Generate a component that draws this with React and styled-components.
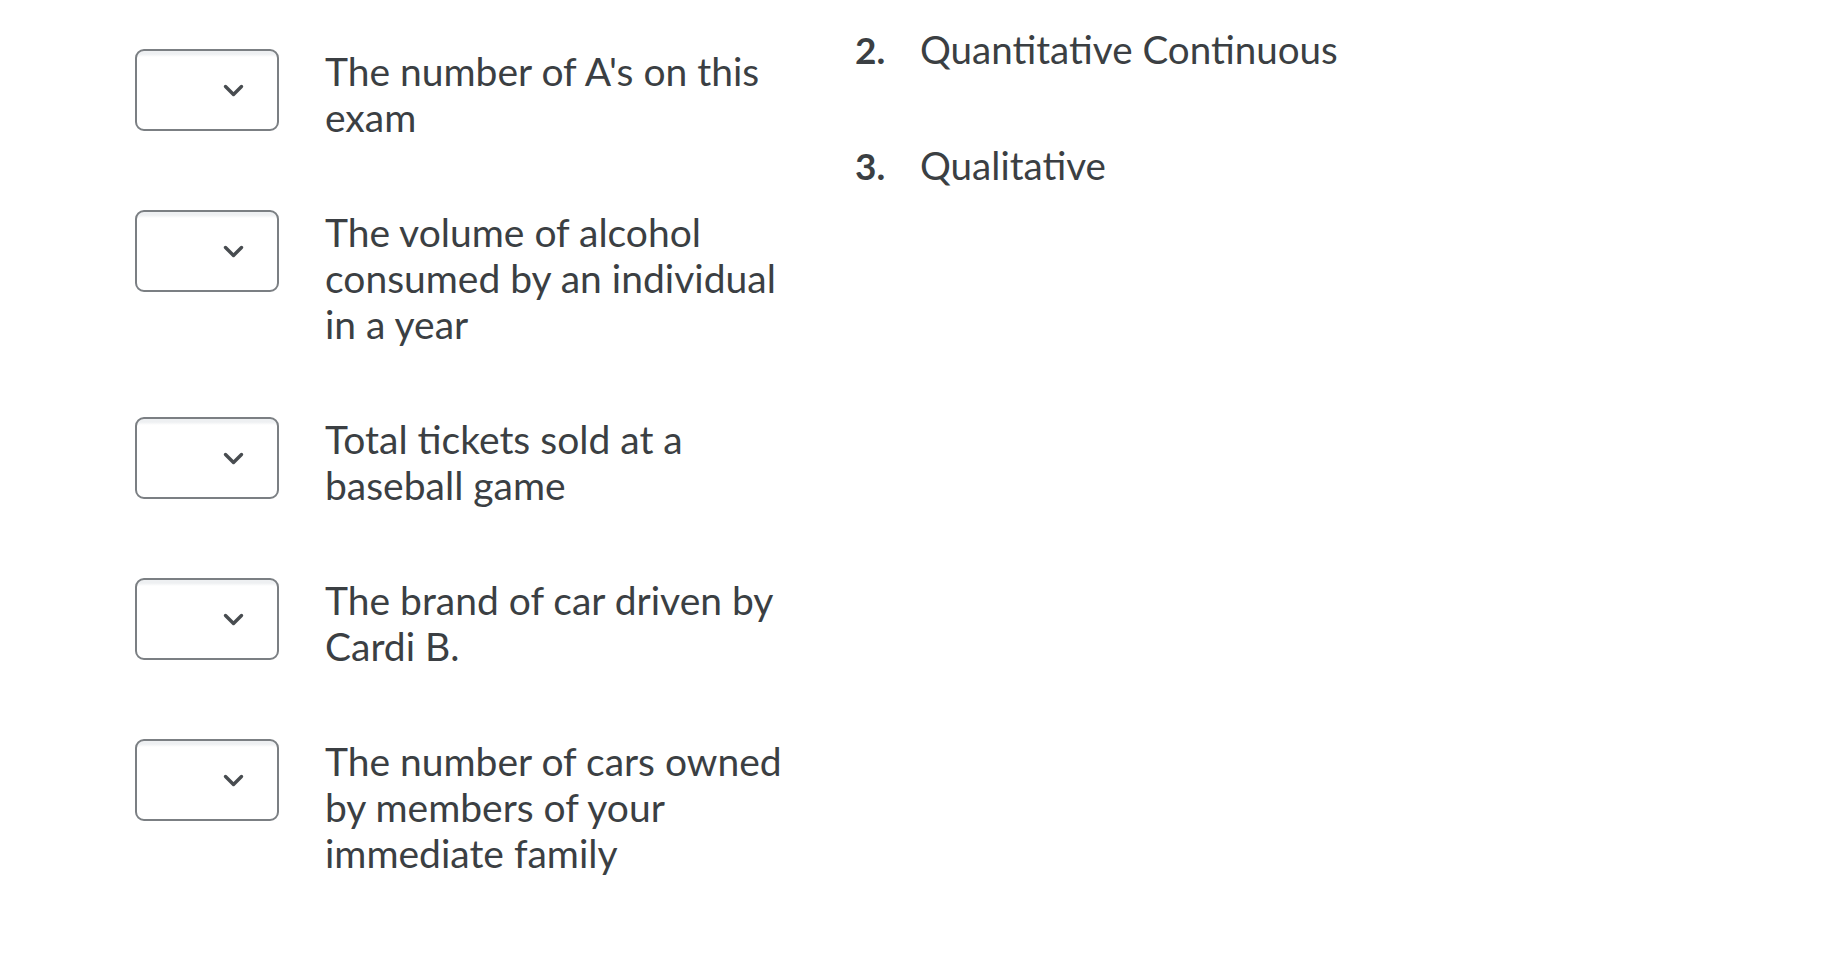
import styled, { createGlobalStyle } from 'styled-components';

const GlobalStyle = createGlobalStyle`
  html, body {
    margin: 0;
    padding: 0;
    background: #fff;
  }
  body {
    font-family: Lato, "Open Sans", sans-serif;
    color: #3b3f43;
  }
`;

const Page = styled.div`
  display: flex;
  align-items: flex-start;
  padding: 49px 0 0 135px;
`;

const Questions = styled.div`
  display: flex;
  flex-direction: column;
  gap: 70px;
  width: 660px;
`;

const Row = styled.div`
  display: flex;
  align-items: flex-start;
  gap: 46px;
`;

const SelectBox = styled.div`
  flex: none;
  width: 144px;
  height: 82px;
  box-sizing: border-box;
  border: 2px solid #7b7f83;
  border-radius: 9px;
  background: linear-gradient(#eef0f2 0, #eef0f2 3px, #fff 6px);
  display: flex;
  align-items: center;
  justify-content: flex-end;
  padding-right: 32px;

  svg {
    width: 23px;
    height: 15px;
  }
`;

const Prompt = styled.div`
  flex: 1;
  margin-top: -1px;
  font-size: 39px;
  line-height: 46px;
`;

const Answers = styled.ol`
  list-style: none;
  margin: -23px 0 0 60px;
  padding: 0;
  display: flex;
  flex-direction: column;
  gap: 69px;
`;

const Answer = styled.li`
  display: flex;
  align-items: baseline;
  font-size: 38.6px;
  line-height: 46px;
`;

const Num = styled.span`
  width: 65px;
  flex: none;
  font-weight: 700;
  font-size: 37px;
`;

const Chevron = () => (
  <svg viewBox="0 0 23 15" fill="none">
    <path d="M3.5 3.5l8 8 8-8" stroke="#484c50" strokeWidth="3.4" strokeLinecap="round" strokeLinejoin="round" />
  </svg>
);

const prompts = [
  "The number of A's on this exam",
  'The volume of alcohol consumed by an individual in a year',
  'Total tickets sold at a baseball game',
  'The brand of car driven by Cardi B.',
  'The number of cars owned by members of your immediate family',
];

const answers = [
  { n: 2, label: 'Quantitative Continuous' },
  { n: 3, label: 'Qualitative' },
];

export default function App() {
  return (
    <>
      <GlobalStyle />
      <Page>
        <Questions>
          {prompts.map((p) => (
            <Row key={p}>
              <SelectBox>
                <Chevron />
              </SelectBox>
              <Prompt>{p}</Prompt>
            </Row>
          ))}
        </Questions>
        <Answers>
          {answers.map((a) => (
            <Answer key={a.n}>
              <Num>{a.n}.</Num>
              {a.label}
            </Answer>
          ))}
        </Answers>
      </Page>
    </>
  );
}
